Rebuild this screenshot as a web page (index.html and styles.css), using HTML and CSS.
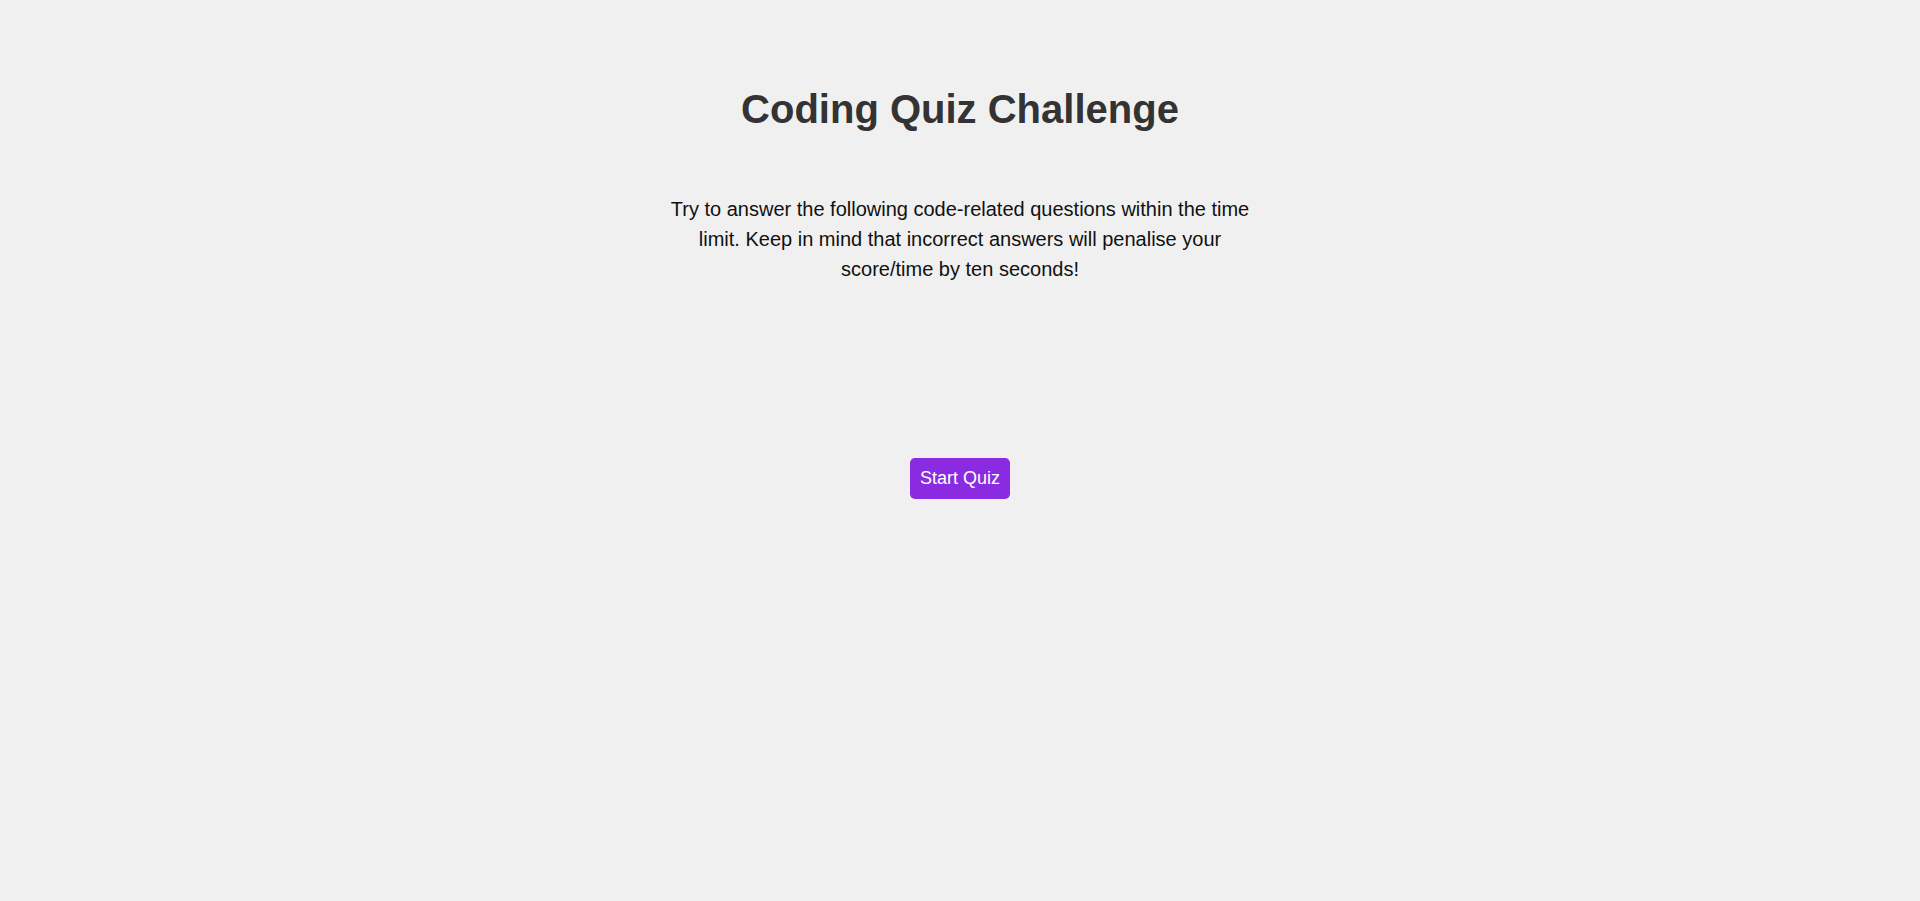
FILE: index.html
```html
<!DOCTYPE html>
<html lang="en">
<head>
<meta charset="utf-8">
<title>Coding Quiz Challenge</title>
<link rel="stylesheet" href="styles.css">
</head>
<body>
<main class="intro">
  <h1 class="title">Coding Quiz Challenge</h1>
  <p class="description">Try to answer the following code-related questions within the time limit. Keep in mind that incorrect answers will penalise your score/time by ten seconds!</p>
  <button class="start-btn" type="button">Start Quiz</button>
</main>
</body>
</html>
```

FILE: styles.css
```css
html, body {
  margin: 0;
  padding: 0;
  background: #f0f0f0;
  min-height: 100%;
}

body {
  font-family: "Liberation Sans", Arial, sans-serif;
  color: #111;
}

.intro {
  display: flex;
  flex-direction: column;
  align-items: center;
  padding-top: 86px;
  text-align: center;
}

.title {
  margin: 0 0 62px;
  font-size: 40px;
  font-weight: bold;
  line-height: 46px;
  color: #333;
}

.description {
  margin: 0;
  max-width: 600px;
  font-size: 20px;
  line-height: 30px;
  color: #111;
}

.start-btn {
  margin-top: 174px;
  padding: 10px;
  border: none;
  border-radius: 5px;
  background: #8a2be2;
  color: #fff;
  font-family: "Liberation Sans", Arial, sans-serif;
  font-size: 18px;
  line-height: 21px;
  cursor: pointer;
}
```
